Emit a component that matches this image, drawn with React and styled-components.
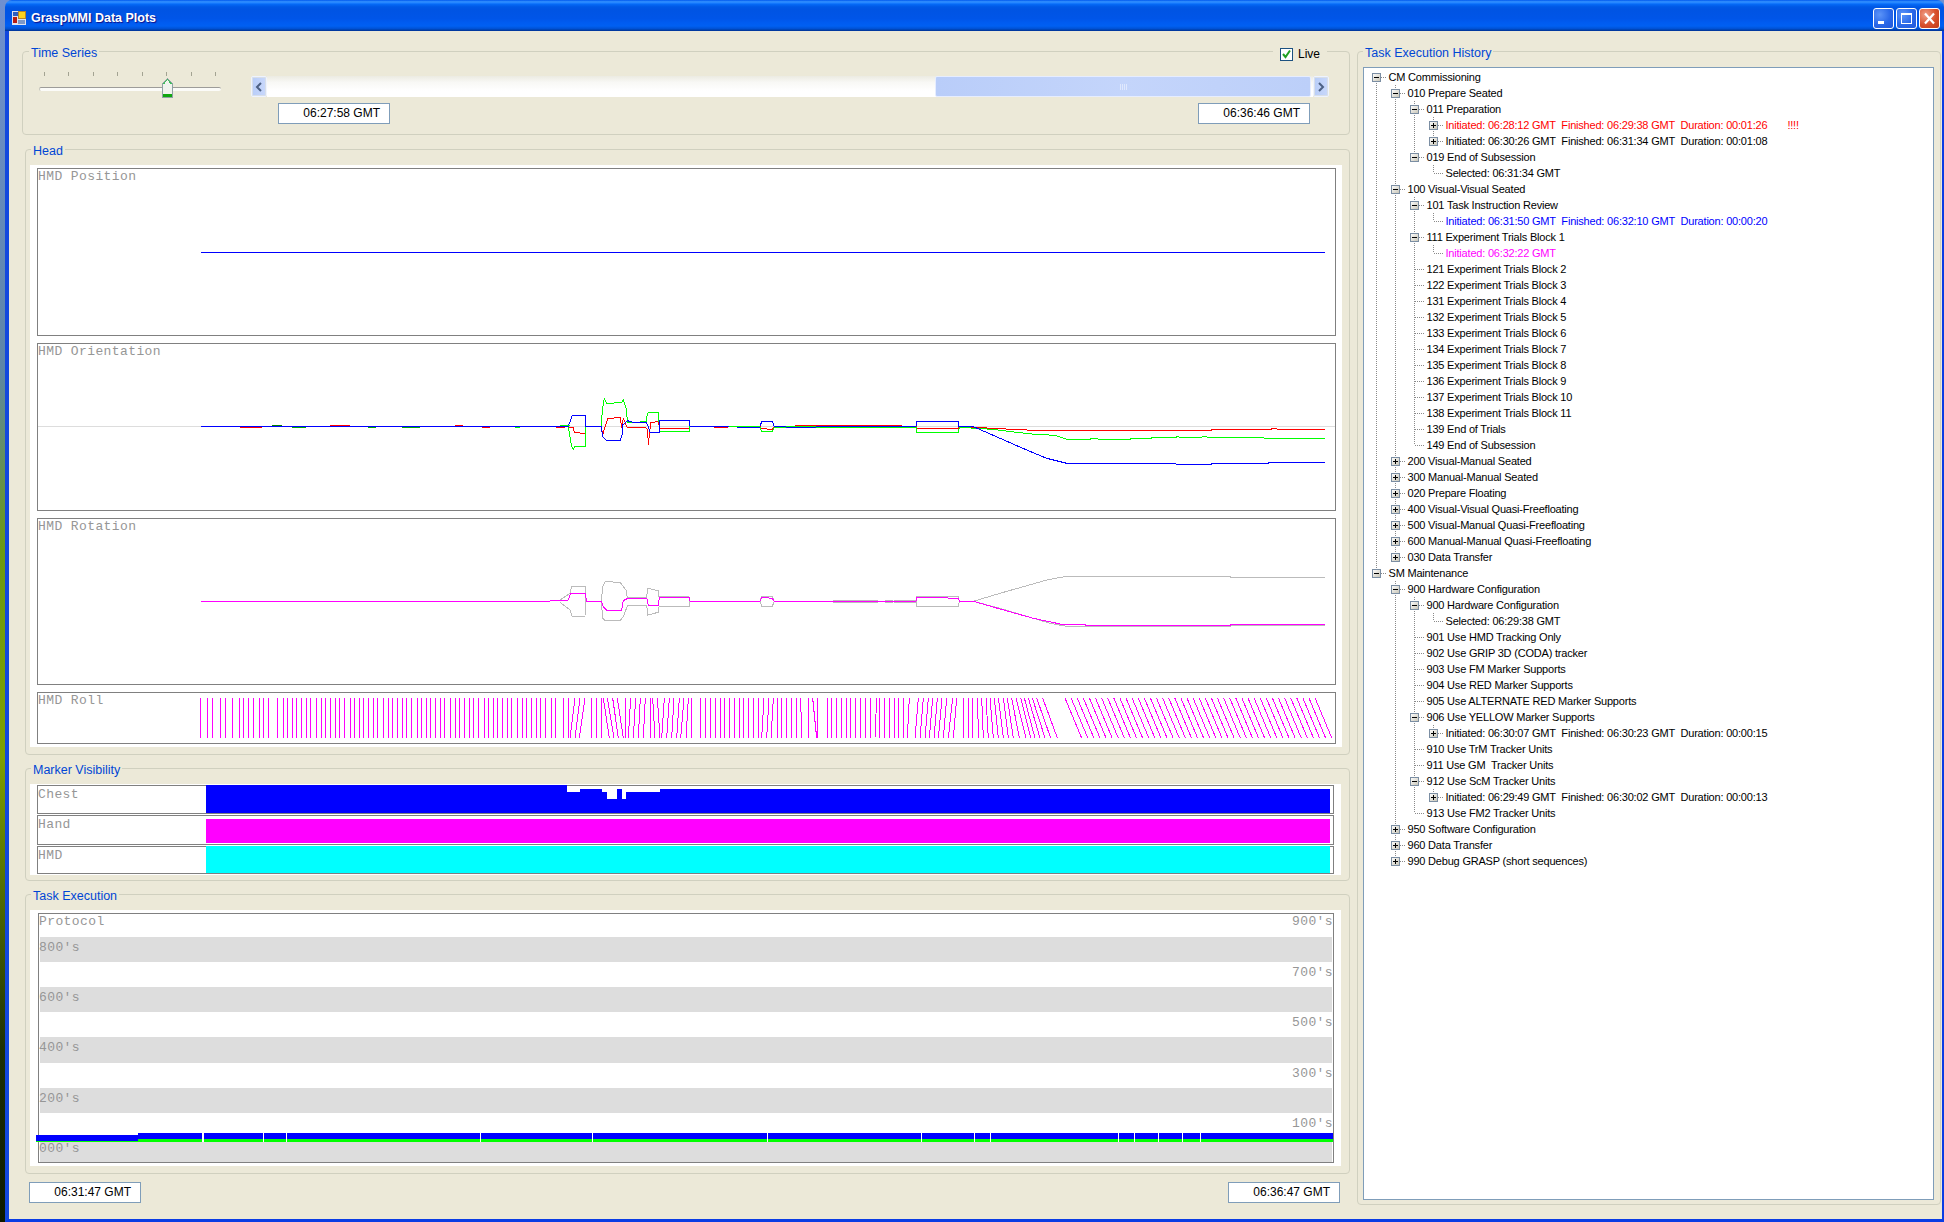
import React from "react";
import styled, { createGlobalStyle } from "styled-components";

const UI_FONT = '"Liberation Sans", Arial, sans-serif';
const PLOT_FONT = '"Liberation Mono", "DejaVu Sans Mono", monospace';

const Global = createGlobalStyle`
  html, body { margin: 0; padding: 0; overflow: hidden; background: #000; }
  * { box-sizing: border-box; }
`;

const Desktop = styled.div`
  width: 1944px; height: 1222px; padding-left: 5px; overflow: hidden;
  font-family: ${UI_FONT};
  background: linear-gradient(180deg, #6f90d0 0, #5d86a8 30%, #6c9a12 45%, #7fa000 62%, #1d3005 86%, #0d1a00 100%);
`;
const Window = styled.div`
  width: 1939px; height: 1222px; display: flex; flex-direction: column;
  border-radius: 7px 7px 0 0; overflow: hidden;
`;
const TitleBar = styled.div`
  height: 31px; flex: none; display: flex; align-items: center; padding: 5px 4px 0 7px; gap: 5px;
  background: linear-gradient(180deg, #0058ee 0, #3593ff 6%, #1a7dff 10%, #0569f5 14%, #0058e6 22%, #0054e3 30%, #0055e8 60%, #005bf0 72%, #0060f2 84%, #0052d6 92%, #0040ab 97%, #003092 100%);
`;
const TitleText = styled.div`
  flex: 1; color: #fff; font-size: 12.5px; font-weight: 700;
  text-shadow: 1px 1px 1px #0f1089;
`;
const CaptionButtons = styled.div`display: flex; gap: 2px;`;
const CaptionButton = styled.div`
  width: 21px; height: 21px; border: 1px solid #fff; border-radius: 3px;
  display: flex; align-items: center; justify-content: center;
  background: ${p => p.$close
    ? "radial-gradient(circle at 30% 30%, #f0a088, #d8502c 55%, #c03c18)"
    : "radial-gradient(circle at 30% 30%, #5c94f8, #2a68e8 55%, #2358d8)"};
`;
const Client = styled.div`
  flex: 1; display: flex; align-items: flex-start; gap: 7px;
  padding: 13px 0 0 13px; background: #ece9d8;
  border-left: 4px solid #1248de; border-right: 2px solid #0a3ce4; border-bottom: 3px solid #0a3ce4;
`;
const LeftColumn = styled.div`width: 1328px; flex: none; display: flex; flex-direction: column;`;

const Group = styled.fieldset`
  position: relative; min-width: 0; margin: ${p => p.$mt || 0}px 0 0 ${p => p.$ml || 0}px;
  width: ${p => p.$w}px; height: ${p => p.$h}px;
  padding: 9px ${p => p.$pr ?? 7}px 0 ${p => p.$pl ?? 4}px;
  border: 1px solid #d0d0bf; border-radius: 4px;
`;
const GroupTitle = styled.legend`
  margin-left: ${p => p.$x ?? 1}px; padding: 0 2px; height: 14px; line-height: 19px;
  font-size: 12.5px; color: #0046d5; white-space: nowrap;
`;

/* Time series */
const SeriesBody = styled.div`display: flex; gap: 30px; padding: 5px 0 0 16px;`;
const Slider = styled.div`position: relative; width: 182px; height: 26px; flex: none;`;
const Ticks = styled.div`display: flex; justify-content: space-between; padding: 0 5px;`;
const Tick = styled.i`display: block; width: 1px; height: 4px; background: #a3a392;`;
const SliderTrack = styled.div`
  margin-top: 11px; height: 4px; border-radius: 2px; background: #fbfbf8;
  border-top: 1px solid #9d9c99; border-left: 1px solid #c5c4bc;
`;
const SliderThumb = styled.svg`position: absolute; left: 123px; top: 6px;`;
const ScrollColumn = styled.div`width: 1078px; flex: none; padding-top: 4px;`;
const ScrollBar = styled.div`display: flex; height: 21px;`;
const ScrollButton = styled.div`
  width: 16px; flex: none; display: flex; align-items: center; justify-content: center;
  background: linear-gradient(90deg, #b8cdf8, #c9d8fb); border: 1px solid #eef3ff; border-radius: 2px;
  box-shadow: 0 0 0 1px #d8dfe9 inset;
`;
const Trough = styled.div`flex: 1; background: linear-gradient(180deg, #ecebe2 0, #f8f8f5 30%, #ffffff 70%);`;
const ScrollThumb = styled.div`
  height: 21px; width: 376px; margin-left: ${p => p.$left}px;
  display: flex; align-items: center; justify-content: center; gap: 1px;
  background: linear-gradient(90deg, #b9cdf9, #c4d5fb 50%, #bccff9); border: 1px solid #e6edff; border-radius: 2px;
`;
const Grip = styled.i`display: block; width: 1px; height: 6px; background: #dfe8fd;`;
const TimeRow = styled.div`
  display: flex; justify-content: space-between; padding: 6px 19px 0 27px;
`;
const TimeBox = styled.div`
  width: 112px; height: 21px; border: 1px solid #7f9db9; background: #fff; color: #000;
  font-size: 12px; line-height: 19px; text-align: right; padding-right: 9px;
`;
const LiveToggle = styled.div`
  position: absolute; right: 22px; top: -12px; width: 54px; height: 16px; background: #ece9d8;
  display: flex; align-items: center; gap: 5px; padding-left: 7px; font-size: 12px; color: #000;
`;
const CheckBox = styled.div`
  width: 13px; height: 13px; border: 1px solid #1c5180; background: #fff; flex: none;
  display: flex; align-items: center; justify-content: center;
`;

/* Plots */
const WhitePanel = styled.div`
  display: flex; flex-direction: column; background: #fff;
  gap: ${p => p.$gap}px; padding: ${p => p.$pt}px ${p => p.$pr}px ${p => p.$pt}px ${p => p.$pl}px;
`;
const Plot = styled.div`
  position: relative; height: ${p => p.$h}px; border: 1px solid #808080; background: #fff; flex: none;
`;
const PlotTitle = styled.div`
  font-family: ${PLOT_FONT}; font-size: 13px; line-height: 14px; color: #969696;
  letter-spacing: 0.4px; padding-top: 1px; white-space: pre; position: relative;
`;
const ChartSvg = styled.svg`position: absolute; left: 0; top: 0; shape-rendering: crispEdges;`;

const MarkerRow = styled.div`
  display: flex; height: ${p => p.$h}px; border: 1px solid #808080; background: #fff; flex: none;
`;
const MarkerLabel = styled(PlotTitle)`width: 168px; flex: none; padding-top: 2px;`;
const MarkerFill = styled.div`
  width: 1124px; height: ${p => p.$h}px; margin-top: ${p => p.$mt}px; background: ${p => p.$color};
`;
const MarkerSvg = styled.svg`margin-top: -1px; shape-rendering: crispEdges;`;

const ProtocolPlot = styled.div`
  position: relative; height: 250px; border: 1px solid #808080;
  background: #fff; padding: 0 1px; display: flex; flex-direction: column;
`;
const ProtocolRow = styled.div`
  height: ${p => p.$h}px; flex: none; padding-top: ${p => p.$pt ?? 4}px; display: flex;
  justify-content: ${p => (p.$right && !p.$both ? "flex-end" : "space-between")};
  background: ${p => (p.$shade ? "#dddddd" : "#fff")};
`;
const ProtocolLabel = styled(PlotTitle)`margin: 0 -1px; padding-top: 0;`;
const StripSvg = styled.svg`position: absolute; left: -3px; top: 216px; shape-rendering: crispEdges;`;
const BottomBar = styled.div`display: flex; justify-content: space-between; margin-top: 8px; padding: 0 10px 0 7px;`;

/* Tree */
const TreeBox = styled.div`
  height: 1133px; border: 1px solid #7f9db9; background: #fff; padding: 1px 0 0 2.5px; overflow: hidden;
`;
const TreeRow = styled.div`display: flex; height: 16px; align-items: center;`;
const TreeLabel = styled.span`
  font-size: 11px; letter-spacing: -0.2px; line-height: 16px; color: ${p => p.$color || "#000"}; white-space: pre; padding-left: 3px;
`;

const z3 = (ox, oy, pts) => pts.map(([x, y]) => `${(ox + x / 3).toFixed(1)},${(oy + y / 3).toFixed(1)}`);
const a = (...pts) => pts.flat();
const L = ({ pts, c }) => <polyline points={pts.join(" ")} fill="none" stroke={c} strokeWidth="1" />;

const Chart = ({ x, y, w, h, children }) => (
  <ChartSvg width={w} height={h} viewBox={`${x} ${y} ${w} ${h}`}>{children}</ChartSvg>
);

const Z3 = (p) => z3(540, 380, p);
const Z9 = (p) => z3(950, 400, p);

const BLUE = a(["201,426"], Z3([[0,139],[85,139],[90,125],[97,105],[136,105],[136,139],[184,139],[188,170],[197,180],[240,183],[246,165],[248,135],[262,122],[280,127],[318,127],[325,140],[330,157],[357,157],[357,121],[447,121],[450,139],[660,139],[665,125],[697,125],[703,139],[1128,139],[1130,124],[1255,124],[1255,139],[1298,139]]),
  Z9([[150,115],[230,150],[290,175],[350,190],[670,190],[680,193],[785,193],[785,190],[955,190],[955,187],[1125,187]]));
const GREEN = a(["300,426"], Z3([[0,139],[85,139],[90,170],[95,200],[100,207],[105,199],[136,199],[136,139],[184,139],[187,90],[193,55],[200,70],[245,68],[250,60],[260,90],[262,128],[318,125],[320,110],[325,97],[356,97],[358,155],[447,155],[450,139],[660,142],[665,154],[697,154],[703,142],[1128,142],[1130,157],[1255,157],[1258,142]]),
  Z9([[125,88],[200,97],[255,103],[315,106],[350,118],[420,118],[420,115],[455,118],[540,118],[540,115],[605,115],[605,112],[680,112],[680,109],[690,112],[755,112],[760,109],[775,112],[935,112],[945,115],[1125,115]]));
const RED = a(Z3([[85,142],[100,142],[103,158],[135,160],[136,139],[184,139],[188,165],[195,140],[203,116],[240,112],[246,145],[250,115],[262,143],[318,143],[323,150],[325,195],[332,127],[356,125],[358,145],[447,145],[450,139],[660,139],[665,146],[697,148],[703,139],[915,136],[985,136],[1128,139],[1130,145],[1255,145],[1258,139]]),
  Z9([[125,85],[185,88],[250,91],[785,91],[785,88],[965,88],[965,85],[980,85],[982,88],[1125,88]]));
const MAGENTA = a(["201,601"], Z3([[0,664],[60,662],[85,660],[92,640],[135,640],[140,664],[184,664],[190,680],[200,690],[245,690],[250,662],[265,654],[320,654],[325,676],[355,676],[358,652],[447,652],[450,664],[660,664],[665,652],[697,655],[703,664],[1128,664],[1130,652],[1220,652],[1225,655],[1255,655],[1258,664],[1300,664]]),
  Z9([[150,627],[250,655],[335,673],[405,673],[405,676],[840,676],[845,673],[1125,673]]));
const GRAY_T = a(Z3([[60,660],[90,640],[95,620],[135,618],[136,664],[184,664],[188,620],[195,605],[240,607],[258,630],[262,652],[320,652],[323,625],[355,632],[357,650],[447,650],[450,664],[660,664],[665,650],[697,650],[703,664],[880,664],[1128,664],[1130,650],[1255,650],[1258,664],[1300,664]]),
  Z9([[150,580],[290,540],[350,529],[842,529],[842,532],[1125,532]]));
const GRAY_B = a(Z3([[60,667],[90,690],[97,710],[135,708],[136,664],[184,664],[188,715],[195,722],[240,722],[250,710],[262,678],[320,675],[323,705],[355,697],[357,680],[447,680],[450,664],[660,664],[665,679],[697,679],[703,664],[880,664],[1128,664],[1130,679],[1255,679],[1258,664],[1300,664]]),
  Z9([[150,625],[300,670],[350,679],[840,679],[845,676],[1125,676]]));

/* short fragments of the other channels that show along the resting line */
const FRAGMENTS = [
  [240, 262, 427, "#ff0000"], [272, 282, 425, "#008000"], [292, 306, 427, "#00aa00"], [330, 350, 425, "#ff0000"],
  [368, 376, 427, "#00aa00"], [402, 420, 427, "#00aa00"], [455, 463, 425, "#ff0000"], [482, 490, 427, "#ff0000"],
  [515, 520, 427, "#00ff00"], [556, 565, 427, "#ff0000"], [560, 570, 425, "#00ff00"],
  [714, 728, 427, "#ff0000"], [729, 737, 426, "#00ff00"], [737, 760, 427, "#0000ff"], [736, 760, 426, "#00ff00"],
  [786, 816, 427, "#0000ff"], [786, 816, 426, "#00ff00"],
];
const GRAY_BARS = [[833, 878], [885, 893], [894, 916]];

const rollLines = (() => {
  const out = [];
  [200,207,212,220,225.5,232.6,239,243,248,253.6,259,263,268].forEach(x => out.push([x, x]));
  let x = 277, i = 0;
  while (x < 560) { out.push([x, x]); x += [6, 4.5, 4.5, 4.5, 5, 4.5, 4.5][i % 7]; i++; }
  [[11,11],[25,25],[45,30],[60,45],[75,58],[95,95],[110,110],[125,125],[130,148],[142,162],[158,175],[172,190],[195,195],[212,205],[227,220],[241,235],[256,250],[270,270],[278,285],[292,300],[313,305],[328,320],[342,335],[358,350],[372,362],[385,378],[395,395],[421,421],[436,436],[451,451],[466,466],[480,480],[494,494],[508,508],[522,522],[537,537],[551,552],[565,565],[580,580],[595,595],[612,605],[627,620],[640,633],[652,652],[665,665],[680,680],[695,695],[708,708],[722,725],[745,745],[758,770],[772,772],[802,802],[815,815],[830,830],[843,843],[858,858],[872,872],[886,886],[900,900],[915,915],[930,930],[950,945],[958,958],[972,972],[988,988],[1002,1002],[1016,1016],[1030,1030],[1048,1042],[1075,1065],[1090,1080],[1105,1095],[1118,1108],[1132,1122],[1146,1135],[1160,1150],[1178,1165],[1190,1180]]
    .forEach(([t, b]) => out.push([560 + t / 3, 560 + b / 3]));
  [[190,190],[205,205],[218,218],[233,235],[245,250],[258,265],[270,280],[283,295],[295,310],[310,325],[322,340],[335,358],[348,378],[362,392],[373,405],[385,420],[397,435],[410,452],[428,472]]
    .forEach(([t, b]) => out.push([900 + t / 3, 900 + b / 3]));
  for (let k = 0; k < 42; k++) { const t = 495 + k * 18.3; out.push([900 + t / 3, 900 + (t + 50) / 3]); }
  return out;
})();

const STRIP_GAPS = [[202,2],[262.5,1],[286,1],[480,1],[592,1],[766.5,1],[921,1],[974,1],[989.6,1],[1118,1],[1134,1],[1158,1],[1182,1],[1200,1]];

const n = (label, children, o = {}) => ({ label, children: children || [], ...o });
const TREE = [
  n("CM Commissioning", [
    n("010 Prepare Seated", [
      n("011 Preparation", [
        n("Initiated: 06:28:12 GMT  Finished: 06:29:38 GMT  Duration: 00:01:26       !!!!", [], { plus: true, color: "#ff0000" }),
        n("Initiated: 06:30:26 GMT  Finished: 06:31:34 GMT  Duration: 00:01:08", [], { plus: true }),
      ]),
      n("019 End of Subsession", [n("Selected: 06:31:34 GMT")]),
    ]),
    n("100 Visual-Visual Seated", [
      n("101 Task Instruction Review", [n("Initiated: 06:31:50 GMT  Finished: 06:32:10 GMT  Duration: 00:00:20", [], { color: "#0000ff" })]),
      n("111 Experiment Trials Block 1", [n("Initiated: 06:32:22 GMT", [], { color: "#ff00ff" })]),
      n("121 Experiment Trials Block 2"), n("122 Experiment Trials Block 3"), n("131 Experiment Trials Block 4"),
      n("132 Experiment Trials Block 5"), n("133 Experiment Trials Block 6"), n("134 Experiment Trials Block 7"),
      n("135 Experiment Trials Block 8"), n("136 Experiment Trials Block 9"), n("137 Experiment Trials Block 10"),
      n("138 Experiment Trials Block 11"), n("139 End of Trials"), n("149 End of Subsession"),
    ]),
    ...["200 Visual-Manual Seated","300 Manual-Manual Seated","020 Prepare Floating","400 Visual-Visual Quasi-Freefloating","500 Visual-Manual Quasi-Freefloating","600 Manual-Manual Quasi-Freefloating","030 Data Transfer"]
      .map(l => n(l, [], { plus: true })),
  ]),
  n("SM Maintenance", [
    n("900 Hardware Configuration", [
      n("900 Hardware Configuration", [n("Selected: 06:29:38 GMT")]),
      n("901 Use HMD Tracking Only"), n("902 Use GRIP 3D (CODA) tracker"), n("903 Use FM Marker Supports"),
      n("904 Use RED Marker Supports"), n("905 Use ALTERNATE RED Marker Supports"),
      n("906 Use YELLOW Marker Supports", [n("Initiated: 06:30:07 GMT  Finished: 06:30:23 GMT  Duration: 00:00:15", [], { plus: true })]),
      n("910 Use TrM Tracker Units"), n("911 Use GM  Tracker Units"),
      n("912 Use ScM Tracker Units", [n("Initiated: 06:29:49 GMT  Finished: 06:30:02 GMT  Duration: 00:00:13", [], { plus: true })]),
      n("913 Use FM2 Tracker Units"),
    ]),
    n("950 Software Configuration", [], { plus: true }),
    n("960 Data Transfer", [], { plus: true }),
    n("990 Debug GRASP (short sequences)", [], { plus: true }),
  ]),
];

const flatten = (nodes, guides = [], root = true) => nodes.flatMap((node, i) => {
  const last = i === nodes.length - 1;
  const first = root && i === 0;
  return [
    { node, guides, kind: first ? "start" : last ? "elbow" : "tee" },
    ...flatten(node.children, [...guides, !last], false),
  ];
});
const ROWS = flatten(TREE);

const DOT = { stroke: "#8a8a8a", strokeWidth: 1, strokeDasharray: "1 1", shapeRendering: "crispEdges" };

const Guide = ({ pipe }) => (
  <svg width="19" height="16" style={{ flex: "none" }}>
    {pipe && <line x1="9.5" y1="0" x2="9.5" y2="16" {...DOT} />}
  </svg>
);
const Connector = ({ kind, box }) => (
  <svg width="19" height="16" style={{ flex: "none" }}>
    <line x1="9.5" y1={kind === "start" ? 8 : 0} x2="9.5" y2={kind === "elbow" ? 8 : 16} {...DOT} />
    <line x1="10" y1="8.5" x2="19" y2="8.5" {...DOT} />
    {box && (
      <g shapeRendering="crispEdges">
        <defs>
          <linearGradient id="expander" x1="0" y1="0" x2="1" y2="1">
            <stop offset="0" stopColor="#ffffff" />
            <stop offset="1" stopColor="#c6c3b4" />
          </linearGradient>
        </defs>
        <rect x="5.5" y="4.5" width="8" height="8" fill="url(#expander)" stroke="#7b8ea3" />
        <rect x="7" y="8" width="5" height="1" fill="#000" />
        {box === "plus" && <rect x="9" y="6" width="1" height="5" fill="#000" />}
      </g>
    )}
  </svg>
);

const Tree = () => (
  <TreeBox>
    {ROWS.map(({ node, guides, kind }, i) => (
      <TreeRow key={i}>
        {guides.map((g, k) => <Guide key={k} pipe={g} />)}
        <Connector kind={kind} box={node.plus ? "plus" : node.children.length ? "minus" : null} />
        <TreeLabel $color={node.color}>{node.label}</TreeLabel>
      </TreeRow>
    ))}
  </TreeBox>
);

const PROTOCOL = [
  { h: 23, left: "Protocol", right: "900's", pt: 1 },
  { h: 25, left: "800's", shade: true },
  { h: 25, right: "700's" },
  { h: 25, left: "600's", shade: true },
  { h: 25, right: "500's" },
  { h: 26, left: "400's", shade: true },
  { h: 25, right: "300's" },
  { h: 25, left: "200's", shade: true },
  { h: 25, right: "100's" },
  { h: 24, left: "000's", shade: true },
];

const CHEST = "206,785 567,785 567,792 580,792 580,789 602,789 602,792 607,792 607,799 617,799 617,789 622,789 622,799 626,799 626,792 660,792 660,789 1330,789 1330,813 206,813";

export default function App() {
  return (
    <Desktop>
      <Global />
      <Window>
        <TitleBar>
          <svg width="14" height="14" viewBox="0 0 14 14" shapeRendering="crispEdges">
            <rect width="14" height="14" fill="#dfe3ef" />
            <rect x="1" y="1" width="5" height="4" fill="#2f5fc0" />
            <rect x="6" y="0" width="8" height="8" fill="#b8862a" />
            <rect x="7" y="1" width="6" height="6" fill="#ffd21e" />
            <rect x="1" y="6" width="4" height="6" fill="#b81d12" />
            <rect x="6" y="9" width="7" height="4" fill="#7d99c8" />
          </svg>
          <TitleText>GraspMMI Data Plots</TitleText>
          <CaptionButtons>
            <CaptionButton>
              <svg width="19" height="19" shapeRendering="crispEdges"><rect x="4" y="12" width="6" height="3" fill="#fff" /></svg>
            </CaptionButton>
            <CaptionButton>
              <svg width="19" height="19" shapeRendering="crispEdges"><path d="M4.5 5.5h10v9h-10z" fill="none" stroke="#fff" /><rect x="4" y="4" width="11" height="2" fill="#fff" /></svg>
            </CaptionButton>
            <CaptionButton $close>
              <svg width="19" height="19"><path d="M5 4.5l9 10M14 4.5l-9 10" stroke="#fff" strokeWidth="2.2" fill="none" /></svg>
            </CaptionButton>
          </CaptionButtons>
        </TitleBar>
        <Client>
          <LeftColumn>
            <Group $w={1328} $h={91} $pl={0} $pr={0}>
              <GroupTitle $x={6}>Time Series</GroupTitle>
              <LiveToggle>
                <CheckBox>
                  <svg width="11" height="11" viewBox="0 0 11 11"><path d="M2 5l2.5 3L9 1.5" stroke="#21a121" strokeWidth="2" fill="none" /></svg>
                </CheckBox>
                Live
              </LiveToggle>
              <SeriesBody>
                <Slider>
                  <Ticks>{Array.from({ length: 8 }, (_, i) => <Tick key={i} />)}</Ticks>
                  <SliderTrack />
                  <SliderThumb width="11" height="20" viewBox="0 0 11 20" shapeRendering="crispEdges">
                    <path d="M5.5 .5L10.5 6V19.5H.5V6z" fill="#f1f3ee" stroke="#8fa0a4" />
                    <path d="M1.5 6L5.5 1.5 9.5 6" fill="none" stroke="#3fc05a" />
                    <rect x="1" y="16" width="9" height="3" fill="#0fa60f" />
                  </SliderThumb>
                </Slider>
                <ScrollColumn>
                  <ScrollBar>
                    <ScrollButton>
                      <svg width="8" height="10" viewBox="0 0 8 10"><path d="M6 1L2 5l4 4" stroke="#4d6185" strokeWidth="2" fill="none" /></svg>
                    </ScrollButton>
                    <Trough>
                      <ScrollThumb $left={668}>{[0, 1, 2, 3].map(i => <Grip key={i} />)}</ScrollThumb>
                    </Trough>
                    <ScrollButton>
                      <svg width="8" height="10" viewBox="0 0 8 10"><path d="M2 1l4 4-4 4" stroke="#4d6185" strokeWidth="2" fill="none" /></svg>
                    </ScrollButton>
                  </ScrollBar>
                  <TimeRow>
                    <TimeBox>06:27:58 GMT</TimeBox>
                    <TimeBox>06:36:46 GMT</TimeBox>
                  </TimeRow>
                </ScrollColumn>
              </SeriesBody>
            </Group>

            <Group $w={1325} $ml={3} $mt={7} $h={613}>
              <GroupTitle>Head</GroupTitle>
              <WhitePanel $gap={7} $pt={3} $pr={6} $pl={7}>
                <Plot $h={168}>
                  <Chart x={38} y={169} w={1297} h={166}><L pts={["201,252", "1325,252"]} c="#0000ff" /></Chart>
                  <PlotTitle>HMD Position</PlotTitle>
                </Plot>
                <Plot $h={168}>
                  <Chart x={38} y={344} w={1297} h={166}>
                    <L pts={["38,426", "1335,426"]} c="#dddddd" />
                    <L pts={RED} c="#ff0000" />
                    <L pts={GREEN} c="#00ff00" />
                    <L pts={BLUE} c="#0000ff" />
                    {FRAGMENTS.map(([x1, x2, y, c], i) => <line key={i} x1={x1} x2={x2} y1={y} y2={y} stroke={c} strokeWidth="1" />)}
                  </Chart>
                  <PlotTitle>HMD Orientation</PlotTitle>
                </Plot>
                <Plot $h={167}>
                  <Chart x={38} y={519} w={1297} h={165}>
                    <L pts={GRAY_T} c="#bbbbbb" />
                    <L pts={GRAY_B} c="#bbbbbb" />
                    {GRAY_BARS.map(([x1, x2]) => <rect key={x1} x={x1} y="600" width={x2 - x1} height="3" fill="#bbbbbb" />)}
                    <L pts={MAGENTA} c="#ff00ff" />
                  </Chart>
                  <PlotTitle>HMD Rotation</PlotTitle>
                </Plot>
                <Plot $h={52}>
                  <Chart x={38} y={693} w={1297} h={50}>
                    {rollLines.map(([t, b], i) => (
                      <line key={i} x1={t} y1={698} x2={b} y2={738} stroke="#ff00ff" strokeWidth="1" />
                    ))}
                  </Chart>
                  <PlotTitle>HMD Roll</PlotTitle>
                </Plot>
              </WhitePanel>
            </Group>

            <Group $w={1325} $ml={3} $mt={6} $h={120} $pr={8}>
              <GroupTitle>Marker Visibility</GroupTitle>
              <WhitePanel $gap={1} $pt={1} $pr={7} $pl={7}>
                <MarkerRow $h={29}>
                  <MarkerLabel>Chest</MarkerLabel>
                  <MarkerSvg width="1124" height="28" viewBox="206 785 1124 28"><polygon points={CHEST} fill="#0000ff" /></MarkerSvg>
                </MarkerRow>
                <MarkerRow $h={30}>
                  <MarkerLabel>Hand</MarkerLabel>
                  <MarkerFill $h={24} $mt={3} $color="#ff00ff" />
                </MarkerRow>
                <MarkerRow $h={28}>
                  <MarkerLabel>HMD</MarkerLabel>
                  <MarkerFill $h={27} $mt={-1} $color="#00ffff" />
                </MarkerRow>
              </WhitePanel>
            </Group>

            <Group $w={1325} $ml={3} $mt={6} $h={287} $pr={8}>
              <GroupTitle>Task Execution</GroupTitle>
              <WhitePanel $gap={0} $pt={3} $pr={7} $pl={8}>
                <ProtocolPlot>
                  {PROTOCOL.map((r, i) => (
                    <ProtocolRow key={i} $h={r.h} $pt={r.pt} $shade={r.shade} $right={!!r.right} $both={r.left && r.right}>
                      {r.left && <ProtocolLabel>{r.left}</ProtocolLabel>}
                      {r.right && <ProtocolLabel>{r.right}</ProtocolLabel>}
                    </ProtocolRow>
                  ))}
                  <StripSvg width="1300" height="14" viewBox="36 1130 1300 14">
                    <rect x="36" y="1135" width="102" height="6" fill="#0000ff" />
                    <rect x="36" y="1141" width="102" height="1" fill="#00ff00" />
                    <rect x="138" y="1133" width="1195" height="6" fill="#0000ff" />
                    <rect x="138" y="1139" width="1195" height="3" fill="#00ff00" />
                    {STRIP_GAPS.map(([x, w]) => <rect key={x} x={x} y="1133" width={w} height="9" fill="#fff" />)}
                  </StripSvg>
                </ProtocolPlot>
              </WhitePanel>
            </Group>

            <BottomBar>
              <TimeBox>06:31:47 GMT</TimeBox>
              <TimeBox>06:36:47 GMT</TimeBox>
            </BottomBar>
          </LeftColumn>

          <Group $w={584} $h={1161} $pl={5} $pr={6}>
            <GroupTitle $x={0}>Task Execution History</GroupTitle>
            <Tree />
          </Group>
        </Client>
      </Window>
    </Desktop>
  );
}
